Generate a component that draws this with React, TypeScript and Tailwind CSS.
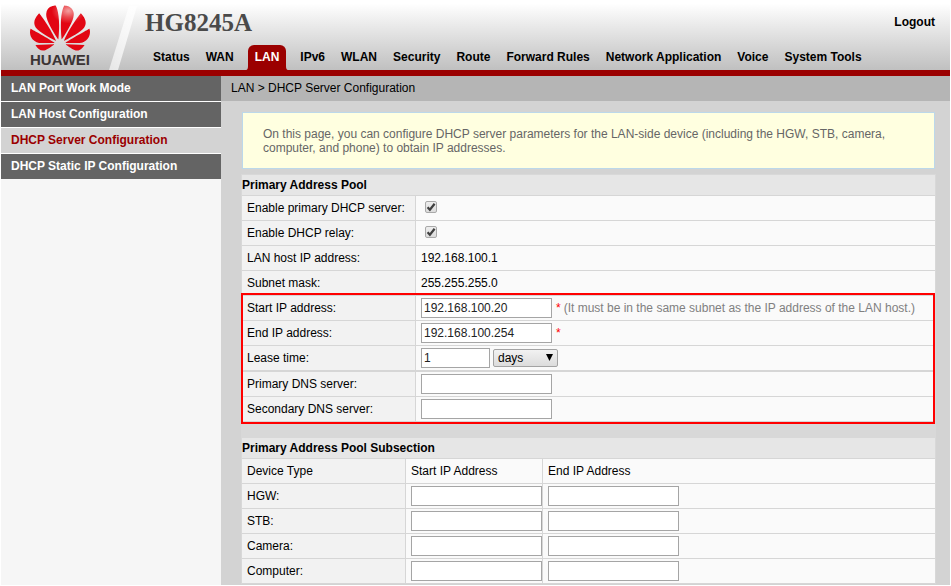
import { useState, type ReactNode } from 'react';
import { SiHuawei } from 'react-icons/si';

const NAV = [
  'Status',
  'WAN',
  'LAN',
  'IPv6',
  'WLAN',
  'Security',
  'Route',
  'Forward Rules',
  'Network Application',
  'Voice',
  'System Tools',
];

const SIDE = [
  'LAN Port Work Mode',
  'LAN Host Configuration',
  'DHCP Server Configuration',
  'DHCP Static IP Configuration',
];

const DEVICES = ['HGW', 'STB', 'Camera', 'Computer'];

const FIELD = 'block h-5 border border-[#a5a5a5] bg-white pl-0.5 text-xs text-[#222] outline-none';

function Logo() {
  return (
    <div className="flex w-[62px] flex-col items-center">
      <svg className="absolute h-0 w-0" aria-hidden="true">
        <defs>
          <radialGradient id="petals" cx="0.64" cy="0.12" r="0.28">
            <stop offset="0" stopColor="#f3a0a0" />
            <stop offset="0.5" stopColor="#ea4a50" />
            <stop offset="1" stopColor="#e20613" />
          </radialGradient>
        </defs>
      </svg>
      <SiHuawei className="-mt-2 h-[60px] w-[60px] fill-[url(#petals)]" aria-hidden="true" />
      <span className="-mt-1.5 text-[15px] leading-4 font-bold text-[#3b3434]">HUAWEI</span>
    </div>
  );
}

function Header() {
  return (
    <header className="flex h-[76px] shrink-0 border-b-6 border-[#9b0000] bg-linear-to-b from-white from-5% to-[#c0c0c0]">
      <div className="flex w-[108px] shrink-0 justify-end pt-1.5 pr-[18px]">
        <Logo />
      </div>
      <svg className="h-[70px] w-7 shrink-0" viewBox="0 0 28 70" aria-hidden="true">
        <defs>
          <linearGradient id="slash" x1="0" x2="1" y1="0" y2="0">
            <stop offset="0" stopColor="#fff" stopOpacity="0.6" />
            <stop offset="1" stopColor="#fff" stopOpacity="0.8" />
          </linearGradient>
        </defs>
        <path d="M0 70 L20 6 H28 L9 70 Z" fill="url(#slash)" />
      </svg>
      <div className="flex min-w-0 grow flex-col justify-between pr-[15px] pl-2">
        <div className="flex items-start justify-between">
          <h1 className="pt-[9px] font-['Liberation_Serif',serif] text-[25px] leading-7 font-bold text-[#4a4a4a]">HG8245A</h1>
          <a href="#logout" className="pt-3.5 leading-4 font-bold">
            Logout
          </a>
        </div>
        <nav className="flex">
          {NAV.map((item) =>
            item === 'LAN' ? (
              <a
                key={item}
                href={`#${item}`}
                aria-current="page"
                className="relative mx-1.5 rounded-t-md bg-[#9b0000] px-[7px] pt-1 pb-[5px] leading-4 font-bold whitespace-nowrap text-white"
              >
                {item}
                <svg viewBox="0 0 2 4" className="absolute bottom-0 -left-0.5 h-1 w-0.5 fill-[#9b0000]" aria-hidden="true">
                  <path d="M2 0 Q2 4 0 4 H2 Z" />
                </svg>
                <svg viewBox="0 0 2 4" className="absolute -right-0.5 bottom-0 h-1 w-0.5 fill-[#9b0000]" aria-hidden="true">
                  <path d="M0 0 Q0 4 2 4 H0 Z" />
                </svg>
              </a>
            ) : (
              <a key={item} href={`#${item}`} className="px-2 pt-1 pb-[5px] leading-4 font-bold whitespace-nowrap">
                {item}
              </a>
            ),
          )}
        </nav>
      </div>
    </header>
  );
}

function Sidebar() {
  return (
    <aside className="w-[220px] shrink-0 bg-[#f6f6f6]">
      <ul className="flex flex-col gap-px bg-white">
        {SIDE.map((item) => (
          <li key={item}>
            <a
              href={`#${item}`}
              className={
                item === 'DHCP Server Configuration'
                  ? 'block bg-[#d3d3d3] px-2.5 pt-1 pb-[5px] leading-4 font-bold text-[#9b0000]'
                  : 'block bg-[#646464] px-2.5 pt-1 pb-[5px] leading-4 font-bold text-white'
              }
            >
              {item}
            </a>
          </li>
        ))}
      </ul>
    </aside>
  );
}

function SectionTitle({ children }: { children: ReactNode }) {
  return <h2 className="border-b border-[#d6d6d6] bg-[#e6e6e6] pt-0.5 pb-0.5 leading-4 font-bold">{children}</h2>;
}

function Row({ label, id, children }: { label: string; id?: string; children: ReactNode }) {
  return (
    <div className="flex h-[25px] border-b border-[#d6d6d6] bg-[#fafafa]">
      <div className="flex w-[174px] shrink-0 items-center border-r border-[#d6d6d6] bg-[#f2f2f2] pl-[5px] whitespace-nowrap">
        {id ? <label htmlFor={id}>{label}</label> : label}
      </div>
      <div className="flex grow items-center pl-[5px] whitespace-nowrap">{children}</div>
    </div>
  );
}

function Check({ id }: { id: string }) {
  const [on, setOn] = useState(true);
  return (
    <span className="relative ml-1 block h-3.5 w-3">
      <input
        id={id}
        type="checkbox"
        checked={on}
        onChange={() => setOn(!on)}
        className="block h-3 w-3 appearance-none rounded-[2px] border border-[#a9a9a9] bg-linear-to-b from-[#eee] to-[#dcdcdc]"
      />
      {on && (
        <svg viewBox="0 0 12 12" className="pointer-events-none absolute top-0 left-0 h-3 w-3" aria-hidden="true">
          <path d="M2.6 6.2 L4.9 8.8 L9.6 2.8" fill="none" stroke="#404040" strokeWidth="2.2" />
        </svg>
      )}
    </span>
  );
}

export default function App() {
  return (
    <div className="flex min-h-screen flex-col bg-white px-px pb-px font-['Liberation_Sans',Arial,sans-serif] text-xs text-black">
      <Header />
      <div className="flex grow">
        <Sidebar />
        <main className="min-w-0 grow bg-[#d3d3d3]">
          <div className="bg-[#b5b5b5] px-2.5 pt-1 pb-[5px] leading-4">LAN &gt; DHCP Server Configuration</div>
          <div className="pt-[11px] pr-3.5 pl-5">
            <p className="mx-px mb-[5px] border border-[#bcd8ea] bg-[#ffffe0] px-5 pt-3.5 pb-[13px] leading-[14px] text-[#666]">
              On this page, you can configure DHCP server parameters for the LAN-side device (including the HGW, STB, camera, computer, and phone)
              to obtain IP addresses.
            </p>
            <div className="border border-b-0 border-[#d8d8d8] bg-[#d8d8d8]">
              <section>
                <SectionTitle>Primary Address Pool</SectionTitle>
                <Row label="Enable primary DHCP server:" id="primary">
                  <Check id="primary" />
                </Row>
                <Row label="Enable DHCP relay:" id="relay">
                  <Check id="relay" />
                </Row>
                <Row label="LAN host IP address:">192.168.100.1</Row>
                <Row label="Subnet mask:">255.255.255.0</Row>
                <div className="relative">
                  <Row label="Start IP address:" id="start">
                    <input id="start" className={`${FIELD} w-[131px]`} defaultValue="192.168.100.20" />
                    <span className="pl-1 text-[#f00]">*</span>
                    <span className="pl-[3px] text-[#808080]">(It must be in the same subnet as the IP address of the LAN host.)</span>
                  </Row>
                  <Row label="End IP address:" id="end">
                    <input id="end" className={`${FIELD} w-[131px]`} defaultValue="192.168.100.254" />
                    <span className="pl-1 text-[#f00]">*</span>
                  </Row>
                  <div className="border-b border-[#d6d6d6]">
                    <Row label="Lease time:" id="lease">
                      <input id="lease" className={`${FIELD} w-[69px]`} defaultValue="1" />
                      <span className="relative ml-[3px] block">
                        <select
                          aria-label="Lease time unit"
                          className="block h-[18px] w-[65px] appearance-none rounded-[2px] border border-[#a3a3a3] bg-linear-to-b from-[#f2f2f2] to-[#dcdcdc] pl-1 text-xs leading-4"
                        >
                          <option>days</option>
                          <option>hours</option>
                          <option>minutes</option>
                        </select>
                        <svg viewBox="0 0 7 7" className="pointer-events-none absolute top-[5px] right-[5px] h-[7px] w-[7px]" aria-hidden="true">
                          <path d="M0 0 H7 L3.5 7 Z" />
                        </svg>
                      </span>
                    </Row>
                  </div>
                  <Row label="Primary DNS server:" id="dns1">
                    <input id="dns1" className={`${FIELD} w-[131px]`} />
                  </Row>
                  <Row label="Secondary DNS server:" id="dns2">
                    <input id="dns2" className={`${FIELD} w-[131px]`} />
                  </Row>
                  <div className="pointer-events-none absolute -top-[3px] right-0 -bottom-0.5 -left-px border-2 border-[#f00]" />
                </div>
              </section>
              <section className="pt-4">
                <SectionTitle>Primary Address Pool Subsection</SectionTitle>
                <table className="w-full table-fixed border-separate border-spacing-0 bg-[#fafafa]">
                  <thead>
                    <tr className="h-[25px]">
                      <th className="w-[164px] border-r border-b border-[#d6d6d6] bg-[#f2f2f2] p-0 pl-[5px] text-left font-normal">Device Type</th>
                      <th className="w-[137px] border-r border-b border-[#d6d6d6] p-0 pl-[5px] text-left font-normal">Start IP Address</th>
                      <th className="border-b border-[#d6d6d6] p-0 pl-[5px] text-left font-normal">End IP Address</th>
                    </tr>
                  </thead>
                  <tbody>
                    {DEVICES.map((d) => (
                      <tr key={d} className="h-[25px]">
                        <th className="border-r border-b border-[#d6d6d6] bg-[#f2f2f2] p-0 pl-[5px] text-left font-normal">{d}:</th>
                        <td className="border-r border-b border-[#d6d6d6] p-0 pl-[5px]">
                          <input aria-label={`${d} start IP address`} className={`${FIELD} w-[131px]`} />
                        </td>
                        <td className="border-b border-[#d6d6d6] p-0 pl-[5px]">
                          <input aria-label={`${d} end IP address`} className={`${FIELD} w-[131px]`} />
                        </td>
                      </tr>
                    ))}
                  </tbody>
                </table>
              </section>
            </div>
          </div>
        </main>
      </div>
    </div>
  );
}
